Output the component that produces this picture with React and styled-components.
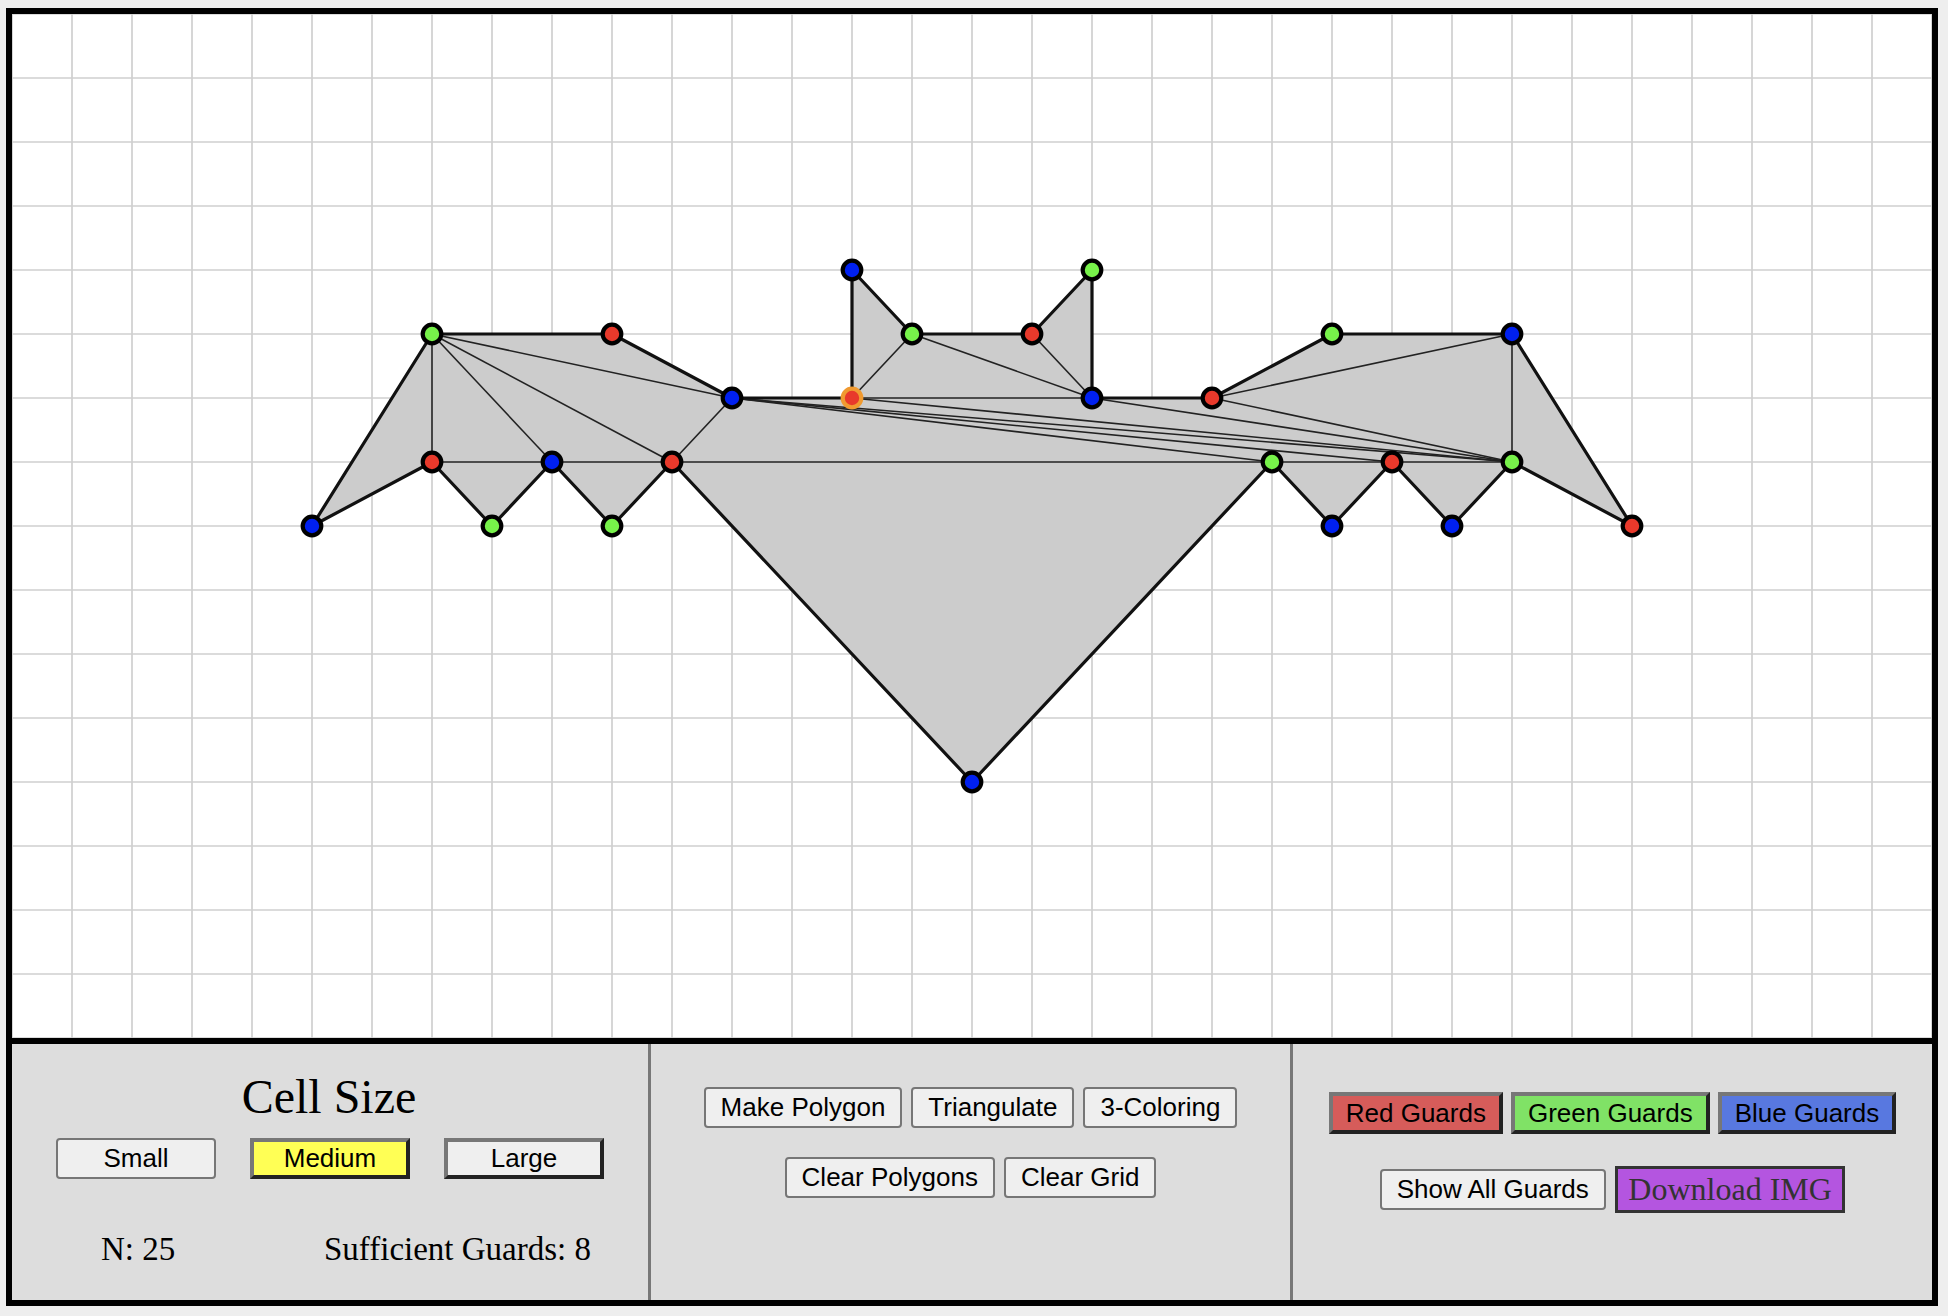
import React from "react";
import styled, { createGlobalStyle } from "styled-components";

const Global = createGlobalStyle`
  html, body { margin: 0; padding: 0; background: #eeeeee; }
  body { font-family: "Liberation Serif", "Times New Roman", serif; }
`;

const Page = styled.div`
  padding: 8px 0 0 6px;
  width: 1932px;
`;

const CanvasFrame = styled.div`
  border: 6px solid #000;
  background: #fff;
  width: 1920px;
  height: 1024px;
`;

const Board = styled.svg`
  display: block;
`;

const Panel = styled.div`
  display: grid;
  grid-template-columns: 639px 642px 1fr;
  height: 256px;
  border: 6px solid #000;
  border-top: none;
  background: #dddddd;
`;

const Section = styled.div`
  display: flex;
  flex-direction: column;
  align-items: center;
  border-right: ${(p) => (p.$last ? "none" : "3px solid #777")};
  padding-top: ${(p) => p.$top}px;
  box-sizing: border-box;
`;

const Title = styled.div`
  font-family: "Liberation Serif", "Times New Roman", serif;
  font-size: 48px;
  line-height: 48px;
  margin-top: 28.5px;
  color: #000;
  margin-left: -2px;
`;

const Row = styled.div`
  display: flex;
  align-items: center;
  justify-content: center;
  gap: ${(p) => p.$gap}px;
  margin-top: ${(p) => p.$mt || 0}px;
`;

const SizeButton = styled.button`
  box-sizing: border-box;
  width: 160px;
  height: 41px;
  padding: 0;
  font-family: "Liberation Sans", Arial, sans-serif;
  font-size: 26px;
  color: #000;
  background: ${(p) => (p.$active ? "#ffff55" : "#efefef")};
  border-style: solid;
  border-width: ${(p) => (p.$raised ? "4px" : "2px")};
  border-color: ${(p) => (p.$raised ? "#777 #222 #222 #777" : "#767676")};
  border-radius: ${(p) => (p.$raised ? "0" : "4px")};
`;

const Btn = styled.button`
  box-sizing: border-box;
  font-family: "Liberation Sans", Arial, sans-serif;
  font-size: 26px;
  line-height: 31px;
  padding: 3px 15px;
  color: #000;
  background: #efefef;
  border: 2px solid #767676;
  border-radius: 4px;
`;

const GuardBtn = styled.button`
  box-sizing: border-box;
  font-family: "Liberation Sans", Arial, sans-serif;
  font-size: 26px;
  line-height: 30px;
  padding: 2px 13px;
  color: #000;
  background: ${(p) => p.$bg};
  border-style: solid;
  border-width: 4px;
  border-color: #777 #222 #222 #777;
  border-radius: 0;
`;

const DownloadBtn = styled.button`
  box-sizing: border-box;
  font-family: "Liberation Serif", "Times New Roman", serif;
  font-size: 32px;
  line-height: 37px;
  padding: 2px 10.5px;
  color: #333;
  background: #b455e0;
  border: 3px solid #333;
  border-radius: 0;
`;

const Stats = styled.div`
  align-self: stretch;
  display: flex;
  justify-content: space-between;
  padding: 0 57px 0 89px;
  margin-top: 53.7px;
  font-family: "Liberation Serif", "Times New Roman", serif;
  font-size: 33px;
  line-height: 32px;
  color: #000;
`;

const W = 60;
const H = 64;
const COLORS = { r: "#e8392b", g: "#77f24a", b: "#0020f0" };

const VERTS = [
  [5, 8, "b"], [7, 5, "g"], [10, 5, "r"], [12, 6, "b"], [14, 6, "r", true],
  [14, 4, "b"], [15, 5, "g"], [17, 5, "r"], [18, 4, "g"], [18, 6, "b"],
  [20, 6, "r"], [22, 5, "g"], [25, 5, "b"], [27, 8, "r"], [25, 7, "g"],
  [24, 8, "b"], [23, 7, "r"], [22, 8, "b"], [21, 7, "g"], [16, 12, "b"],
  [11, 7, "r"], [10, 8, "g"], [9, 7, "b"], [8, 8, "g"], [7, 7, "r"],
];

const DIAGS = [
  [[7, 5], [7, 7]], [[7, 5], [9, 7]], [[7, 5], [11, 7]], [[7, 5], [12, 6]],
  [[7, 7], [9, 7]], [[9, 7], [11, 7]], [[11, 7], [12, 6]], [[11, 7], [21, 7]],
  [[21, 7], [23, 7]], [[23, 7], [25, 7]], [[25, 5], [25, 7]], [[20, 6], [25, 5]],
  [[20, 6], [25, 7]], [[15, 5], [14, 6]], [[15, 5], [18, 6]], [[17, 5], [18, 6]],
  [[14, 6], [18, 6]], [[12, 6], [21, 7]], [[12, 6], [23, 7]], [[12, 6], [25, 7]],
  [[14, 6], [25, 7]], [[18, 6], [25, 7]],
];

function Grid() {
  const lines = [];
  for (let c = 0; c <= 32; c++) {
    lines.push(<line key={"v" + c} x1={c * W} y1={0} x2={c * W} y2={1024} />);
  }
  for (let r = 0; r <= 16; r++) {
    lines.push(<line key={"h" + r} x1={0} y1={r * H} x2={1920} y2={r * H} />);
  }
  return (
    <g stroke="#cfcfcf" strokeWidth="1.7">
      {lines}
    </g>
  );
}

function PolygonDrawing() {
  const pts = VERTS.map(([c, r]) => `${c * W},${r * H}`).join(" ");
  return (
    <g>
      <polygon points={pts} fill="#cccccc" stroke="none" />
      <g stroke="#222" strokeWidth="1.6">
        {DIAGS.map(([a, b], i) => (
          <line key={i} x1={a[0] * W} y1={a[1] * H} x2={b[0] * W} y2={b[1] * H} />
        ))}
      </g>
      <polygon points={pts} fill="none" stroke="#111" strokeWidth="3.2" strokeLinejoin="round" />
      {VERTS.map(([c, r, col, sel], i) => (
        <circle
          key={i}
          cx={c * W}
          cy={r * H}
          r="9.3"
          fill={COLORS[col]}
          stroke={sel ? "#f09a30" : "#000"}
          strokeWidth="4.2"
        />
      ))}
    </g>
  );
}

export default function App() {
  return (
    <Page>
      <Global />
      <CanvasFrame>
        <Board width="1920" height="1024" viewBox="0 0 1920 1024">
          <Grid />
          <PolygonDrawing />
        </Board>
      </CanvasFrame>
      <Panel>
        <Section $top={0}>
          <Title>Cell Size</Title>
          <Row $gap={34} $mt={17.8}>
            <SizeButton>Small</SizeButton>
            <SizeButton $raised $active>Medium</SizeButton>
            <SizeButton $raised>Large</SizeButton>
          </Row>
          <Stats>
            <span>N: 25</span>
            <span>Sufficient Guards: 8</span>
          </Stats>
        </Section>
        <Section $top={42.7}>
          <Row $gap={9}>
            <Btn>Make Polygon</Btn>
            <Btn>Triangulate</Btn>
            <Btn>3-Coloring</Btn>
          </Row>
          <Row $gap={9} $mt={29}>
            <Btn>Clear Polygons</Btn>
            <Btn>Clear Grid</Btn>
          </Row>
        </Section>
        <Section $top={48} $last>
          <Row $gap={8}>
            <GuardBtn $bg="#d65c5a">Red Guards</GuardBtn>
            <GuardBtn $bg="#80e266">Green Guards</GuardBtn>
            <GuardBtn $bg="#5878e0">Blue Guards</GuardBtn>
          </Row>
          <Row $gap={9} $mt={32}>
            <Btn>Show All Guards</Btn>
            <DownloadBtn>Download IMG</DownloadBtn>
          </Row>
        </Section>
      </Panel>
    </Page>
  );
}
